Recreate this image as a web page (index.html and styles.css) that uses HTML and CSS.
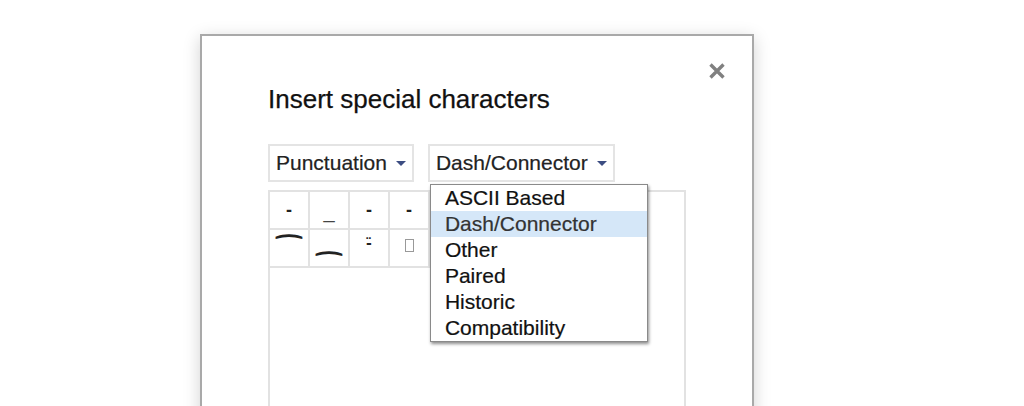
FILE: index.html
```html
<!DOCTYPE html>
<html lang="en">
<head>
    <meta charset="UTF-8">
    <title>Insert special characters</title>
    <link rel="stylesheet" href="styles.css">
</head>
<body>
    <div class="dialog">
        <button class="close-btn" type="button" aria-label="Close">
            <svg width="18" height="18" viewBox="0 0 18 18">
                <path d="M2.5 2.5 L15.5 15.5 M15.5 2.5 L2.5 15.5" stroke="#808080" stroke-width="3.4" fill="none"/>
            </svg>
        </button>

        <h2 class="dialog-title">Insert special characters</h2>

        <div class="selectors">
            <div class="dropdown">
                <span class="dropdown-label">Punctuation</span>
                <span class="arrow"></span>
            </div>
            <div class="dropdown open">
                <span class="dropdown-label">Dash/Connector</span>
                <span class="arrow"></span>
                <!-- Category menu -->
                <ul class="menu">
                    <li>ASCII Based</li>
                    <li class="selected">Dash/Connector</li>
                    <li>Other</li>
                    <li>Paired</li>
                    <li>Historic</li>
                    <li>Compatibility</li>
                </ul>
            </div>
        </div>

        <!-- cells under the open menu are left blank -->
        <div class="char-box">
            <div class="char-grid">
                <div class="cell">-</div>
                <div class="cell low">_</div>
                <div class="cell">-</div>
                <div class="cell">-</div>
                <div class="cell"></div>
                <div class="cell"></div>
                <div class="cell"></div>
                <div class="cell"></div>
                <div class="cell"></div>
                <div class="cell top">⁀</div>
                <div class="cell bottom">⁔</div>
                <div class="cell tiny">-̈</div>
                <div class="cell"><span class="tofu"></span></div>
                <div class="cell"></div>
                <div class="cell"></div>
                <div class="cell"></div>
                <div class="cell"></div>
                <div class="cell"></div>
            </div>
        </div>
    </div>
</body>
</html>
```

FILE: styles.css
```css
body {
    margin: 0;
    padding: 34px 0 0 200px;
    background: #fff;
    font-family: "Liberation Sans", Arial, sans-serif;
    color: #222;
    overflow: hidden;
}

.dialog {
    position: relative;
    width: 484px;
    height: 420px;
    padding: 48px 0 0 66px;
    background: #fff;
    border: 2px solid #a9a9a9;
    box-shadow: 0 4px 16px rgba(0, 0, 0, 0.18);
}

.close-btn {
    position: absolute;
    top: 26px;
    right: 26px;
    width: 18px;
    height: 18px;
    padding: 0;
    border: none;
    background: transparent;
    cursor: pointer;
}

.close-btn svg {
    display: block;
}

.dialog-title {
    margin: 0;
    font-size: 26px;
    line-height: 30px;
    font-weight: normal;
    color: #111;
    -webkit-text-stroke: 0.25px #111;
}

.selectors {
    display: flex;
    gap: 14px;
    margin-top: 30px;
}

.dropdown {
    position: relative;
    display: flex;
    align-items: center;
    gap: 9px;
    padding: 5px 6px;
    border: 2px solid #e4e4e4;
    font-size: 21px;
    line-height: 24px;
    color: #222;
    -webkit-text-stroke: 0.2px #222;
    cursor: pointer;
}

.arrow {
    width: 0;
    height: 0;
    border-left: 5px solid transparent;
    border-right: 5px solid transparent;
    border-top: 5px solid #3c4d82;
    margin-top: 1px;
}

.menu {
    position: absolute;
    top: 38px;
    left: 0;
    z-index: 2;
    width: 216px;
    margin: 0;
    padding: 0;
    list-style: none;
    background: #fff;
    border: 1px solid #8a8a8a;
    box-shadow: 1px 2px 3px rgba(0, 0, 0, 0.45);
    -webkit-text-stroke: 0;
}

.menu li {
    height: 26px;
    padding-left: 14px;
    font-size: 21px;
    line-height: 26px;
    color: #111;
    -webkit-text-stroke: 0.2px #111;
}

.menu li.selected {
    background: #d5e7f8;
    color: #333;
    -webkit-text-stroke: 0.2px #333;
}

.char-box {
    width: 414px;
    height: 240px;
    margin-top: 8px;
    border: 2px solid #e2e2e2;
}

.char-grid {
    display: grid;
    grid-template-columns: repeat(9, 40px);
}

.cell {
    display: flex;
    align-items: center;
    justify-content: center;
    height: 36px;
    border-right: 2px solid #e2e2e2;
    border-bottom: 2px solid #e2e2e2;
    font-family: "Liberation Sans", "DejaVu Sans", sans-serif;
    font-size: 18px;
    font-weight: bold;
    color: #222;
}

.cell.low {
    padding-top: 2px;
    height: 34px;
    font-size: 20px;
    font-weight: normal;
    color: #444;
}

.cell.top,
.cell.bottom {
    font-family: "DejaVu Sans", sans-serif;
    font-weight: bold;
    font-size: 30px;
    line-height: 30px;
}

.cell.top {
    align-items: flex-start;
    padding-top: 7px;
    height: 29px;
}

.cell.bottom {
    align-items: flex-end;
    padding-bottom: 12px;
    height: 24px;
}

.cell.tiny {
    font-family: "DejaVu Sans", sans-serif;
    font-size: 14px;
    padding-bottom: 10px;
    height: 26px;
}

.tofu {
    display: block;
    width: 7px;
    height: 11px;
    margin-bottom: 6px;
    border: 1px solid #999;
}
```
